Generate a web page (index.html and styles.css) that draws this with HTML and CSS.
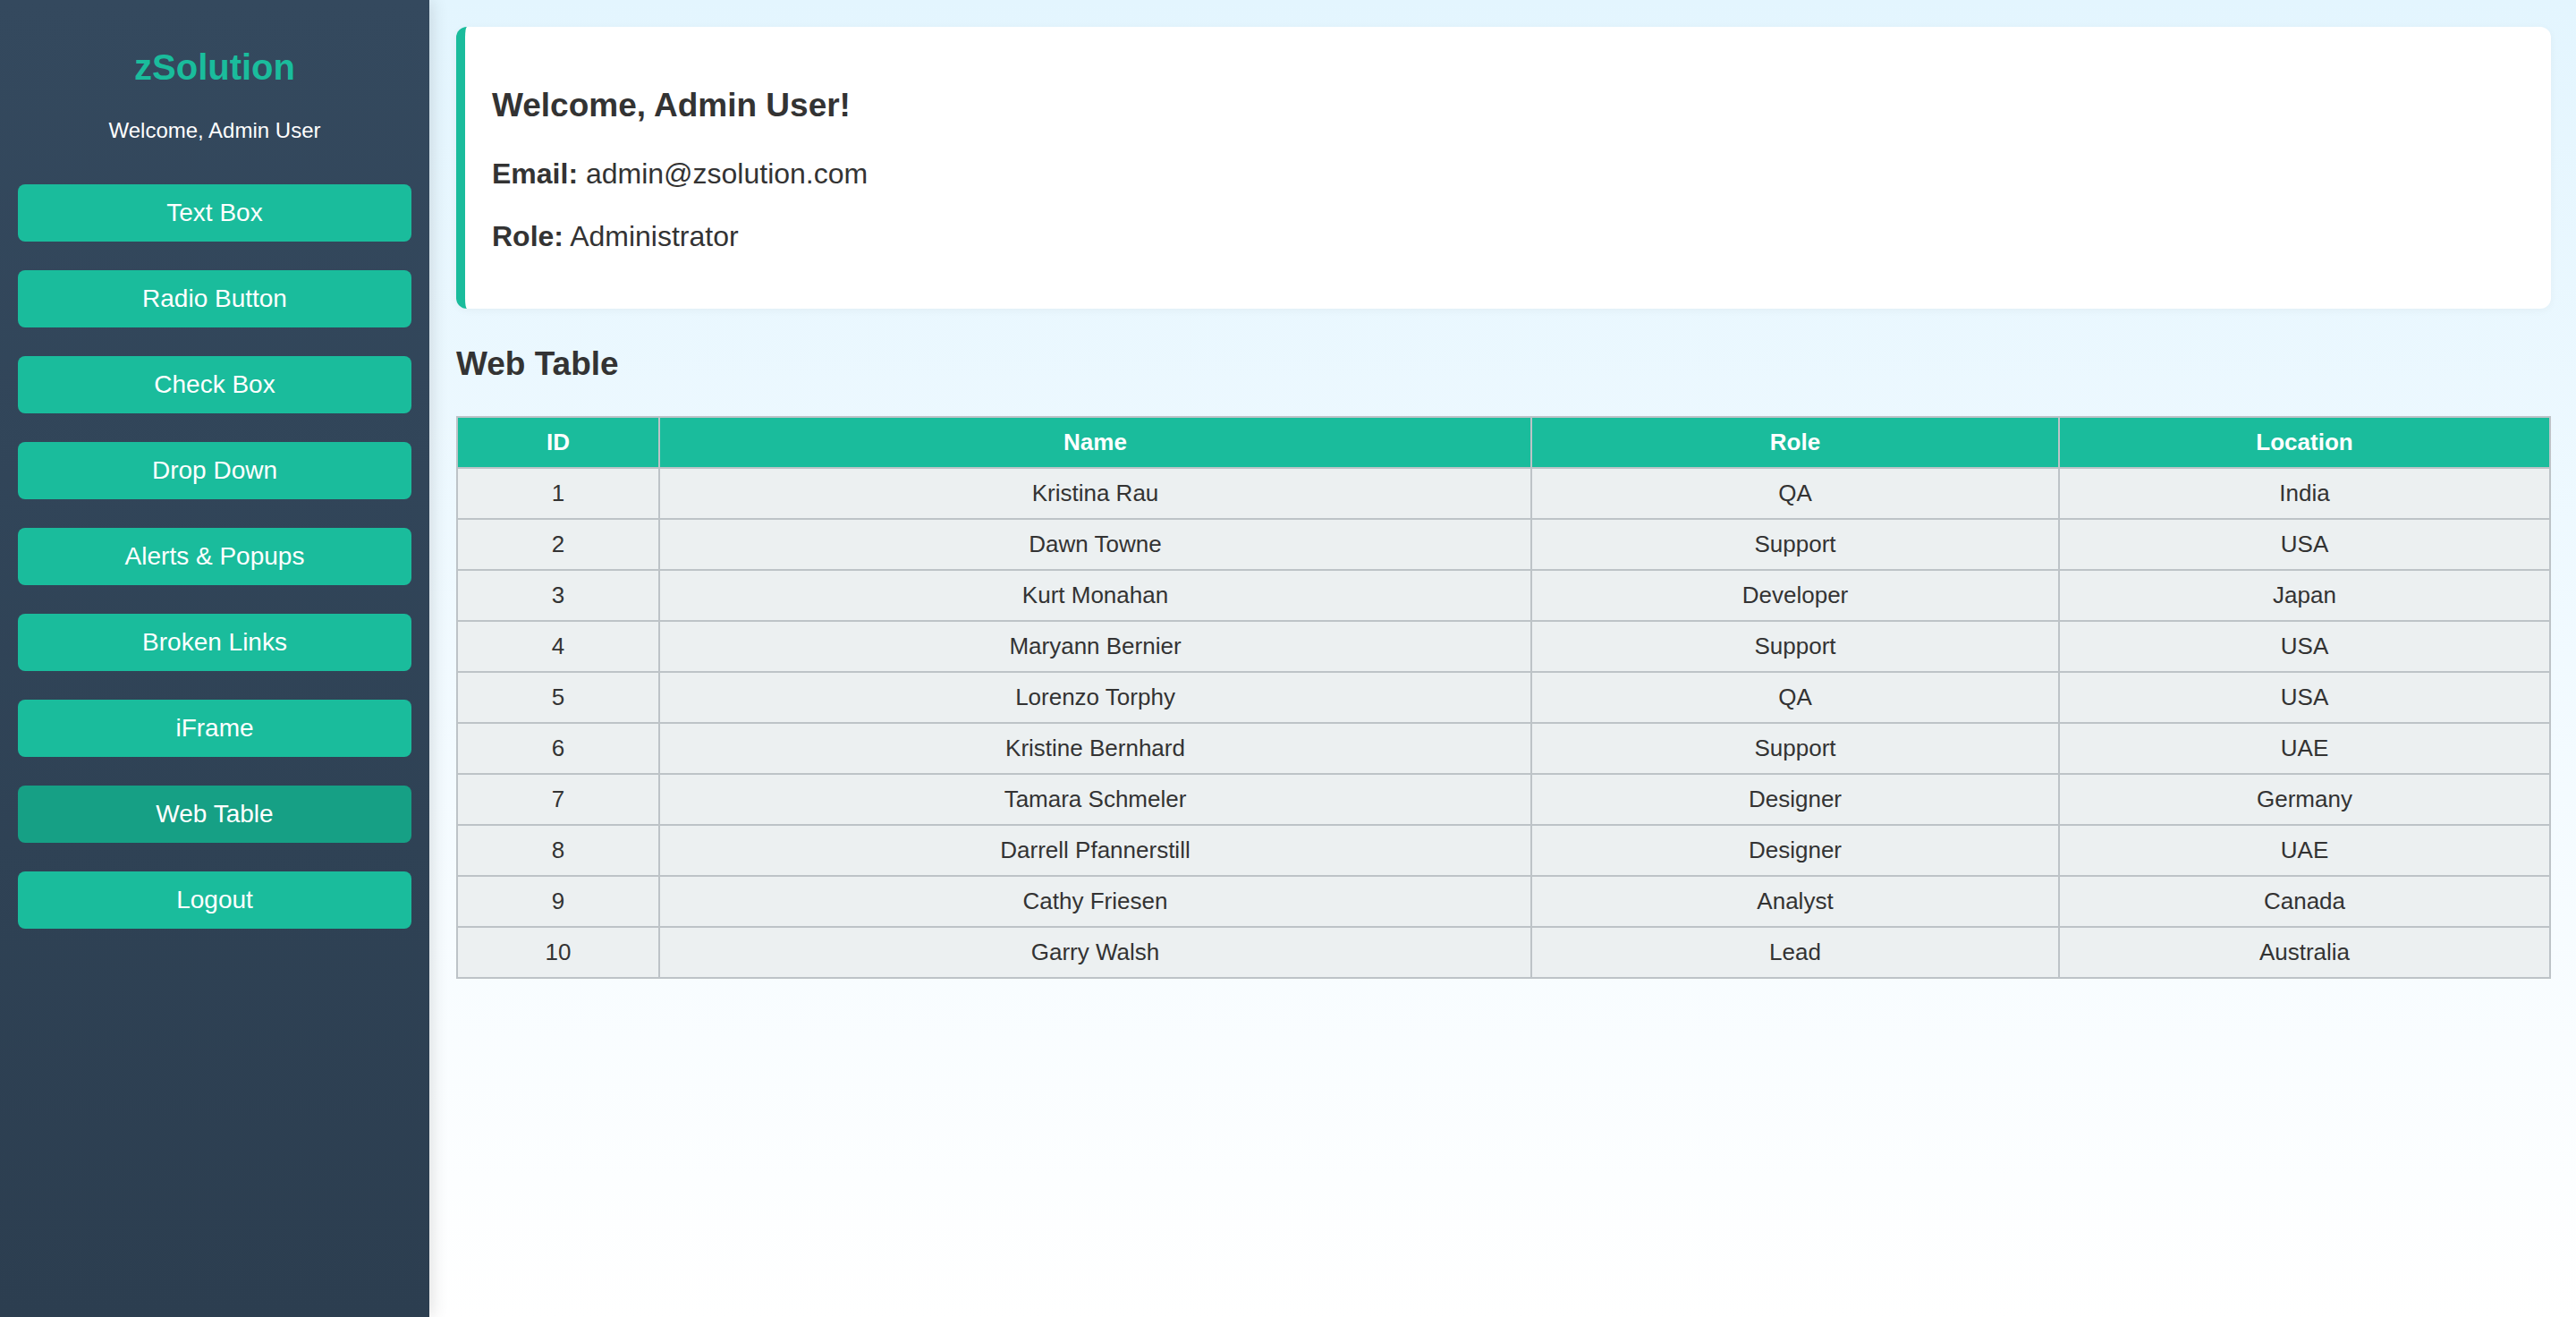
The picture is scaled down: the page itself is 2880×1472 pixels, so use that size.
FILE: index.html
```html
<!DOCTYPE html>
<html lang="en">
<head>
<meta charset="utf-8">
<title>zSolution - Web Table</title>
<link rel="stylesheet" href="styles.css">
</head>
<body>
<div class="layout">
  <aside class="sidebar">
    <h2 class="brand">zSolution</h2>
    <p class="greet">Welcome, Admin User</p>
    <nav class="nav">
      <button class="nav-btn">Text Box</button>
      <button class="nav-btn">Radio Button</button>
      <button class="nav-btn">Check Box</button>
      <button class="nav-btn">Drop Down</button>
      <button class="nav-btn">Alerts &amp; Popups</button>
      <button class="nav-btn">Broken Links</button>
      <button class="nav-btn">iFrame</button>
      <button class="nav-btn active">Web Table</button>
      <button class="nav-btn">Logout</button>
    </nav>
  </aside>
  <main class="main">
    <section class="card">
      <h3 class="card-title">Welcome, Admin User!</h3>
      <p class="card-line"><strong>Email:</strong> admin@zsolution.com</p>
      <p class="card-line last"><strong>Role:</strong> Administrator</p>
    </section>
    <h2 class="section-title">Web Table</h2>
    <table class="data">
      <colgroup>
        <col class="c-id"><col class="c-name"><col class="c-role"><col class="c-loc">
      </colgroup>
      <thead>
        <tr><th>ID</th><th>Name</th><th>Role</th><th>Location</th></tr>
      </thead>
      <tbody>
        <tr><td>1</td><td>Kristina Rau</td><td>QA</td><td>India</td></tr>
        <tr><td>2</td><td>Dawn Towne</td><td>Support</td><td>USA</td></tr>
        <tr><td>3</td><td>Kurt Monahan</td><td>Developer</td><td>Japan</td></tr>
        <tr><td>4</td><td>Maryann Bernier</td><td>Support</td><td>USA</td></tr>
        <tr><td>5</td><td>Lorenzo Torphy</td><td>QA</td><td>USA</td></tr>
        <tr><td>6</td><td>Kristine Bernhard</td><td>Support</td><td>UAE</td></tr>
        <tr><td>7</td><td>Tamara Schmeler</td><td>Designer</td><td>Germany</td></tr>
        <tr><td>8</td><td>Darrell Pfannerstill</td><td>Designer</td><td>UAE</td></tr>
        <tr><td>9</td><td>Cathy Friesen</td><td>Analyst</td><td>Canada</td></tr>
        <tr><td>10</td><td>Garry Walsh</td><td>Lead</td><td>Australia</td></tr>
      </tbody>
    </table>
  </main>
</div>
</body>
</html>
```
FILE: styles.css
```css
* { box-sizing: border-box; }
html, body { margin: 0; padding: 0; }
body {
  font-family: "Liberation Sans", Arial, Helvetica, sans-serif;
  color: #333333;
}
.layout {
  display: flex;
  min-height: 100vh;
}
.sidebar {
  width: 480px;
  flex: 0 0 480px;
  background: linear-gradient(to bottom, #34495e, #2c3e50);
  box-shadow: 3px 0 18px rgba(0, 0, 0, 0.12);
  padding: 52px 20px 20px;
  position: relative;
  z-index: 1;
  display: flex;
  flex-direction: column;
  align-items: stretch;
}
.brand {
  margin: 0;
  font-size: 40px;
  line-height: 46px;
  font-weight: bold;
  color: #1abc9c;
  text-align: center;
}
.greet {
  margin: 34px 0 0;
  font-size: 24px;
  line-height: 28px;
  color: #ffffff;
  text-align: center;
}
.nav {
  margin-top: 46px;
  display: flex;
  flex-direction: column;
  gap: 32px;
}
.nav-btn {
  display: block;
  width: 100%;
  height: 64px;
  border: none;
  border-radius: 8px;
  background: #1abc9c;
  color: #ffffff;
  font-family: "Liberation Sans", Arial, Helvetica, sans-serif;
  font-size: 28px;
  cursor: pointer;
  padding: 0;
}
.nav-btn.active {
  background: #16a085;
}
.main {
  flex: 1;
  padding: 30px 30px 40px;
  background: linear-gradient(to bottom, #e3f5fe 0%, #f1faff 50%, #ffffff 100%);
}
.card {
  background: #ffffff;
  border-left: 10px solid #1abc9c;
  border-radius: 12px;
  padding: 40px 30px 30px;
  box-shadow: 0 2px 10px rgba(0, 0, 0, 0.04);
}
.card-title {
  margin: 27px 0 37px;
  font-size: 37px;
  line-height: 42px;
  font-weight: bold;
}
.card-line {
  margin: 0 0 33px;
  font-size: 32px;
  line-height: 37px;
}
.card-line.last {
  margin-bottom: 32px;
}
.section-title {
  margin: 41px 0 37px;
  font-size: 37px;
  line-height: 42px;
  font-weight: bold;
}
.data {
  width: 100%;
  table-layout: fixed;
  border-collapse: collapse;
  font-size: 26px;
  background: #ecf0f1;
  border: 2px solid #bdc3c7;
}
.c-id { width: 226px; }
.c-name { width: 975px; }
.c-role { width: 590px; }
.c-loc { width: 549px; }
.data th, .data td {
  border: 2px solid #bdc3c7;
  padding: 12px 10px;
  line-height: 31px;
  text-align: center;
}
.data th {
  background: #1abc9c;
  color: #ffffff;
  font-weight: bold;
}
.data td {
  color: #333333;
}
```
